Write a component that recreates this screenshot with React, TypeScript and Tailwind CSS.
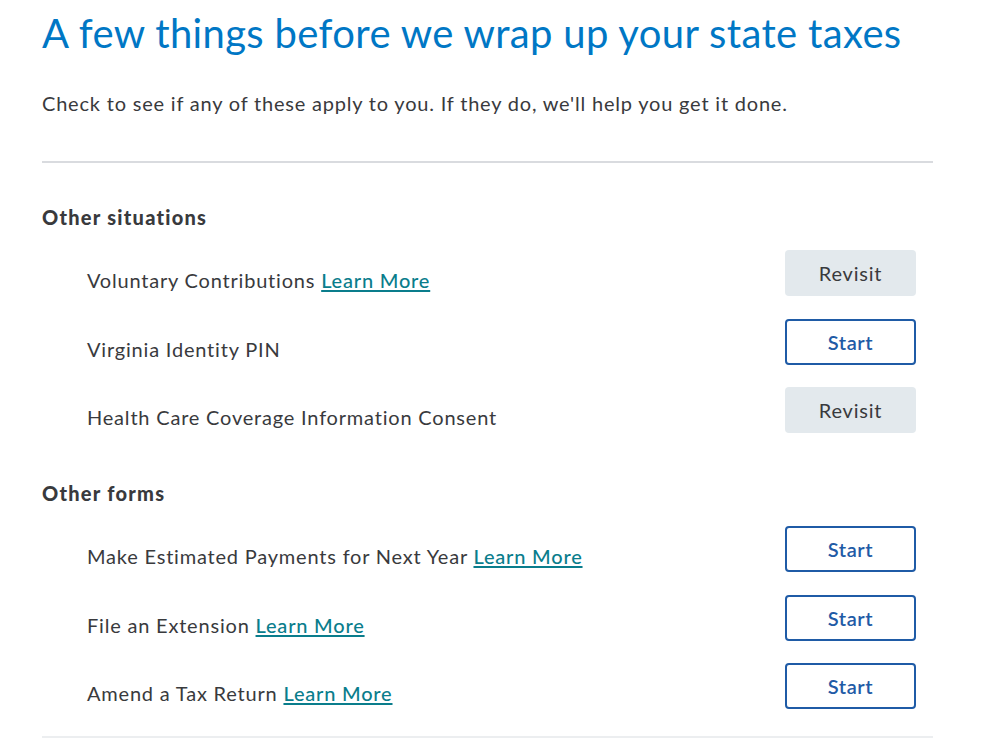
const font = { fontFamily: "Lato, 'Open Sans', sans-serif" };

type Item = {
  label: string;
  learnMore?: boolean;
  action: "Start" | "Revisit";
};

const situations: Item[] = [
  { label: "Voluntary Contributions", learnMore: true, action: "Revisit" },
  { label: "Virginia Identity PIN", action: "Start" },
  { label: "Health Care Coverage Information Consent", action: "Revisit" },
];

const forms: Item[] = [
  { label: "Make Estimated Payments for Next Year", learnMore: true, action: "Start" },
  { label: "File an Extension", learnMore: true, action: "Start" },
  { label: "Amend a Tax Return", learnMore: true, action: "Start" },
];

function ActionButton({ action }: { action: Item["action"] }) {
  if (action === "Revisit") {
    return (
      <button className="flex h-[46px] w-[131px] items-center justify-center rounded-[4px] bg-[#e3e9ed] text-[20px] tracking-[0.8px] text-[#393a3d]">
        Revisit
      </button>
    );
  }
  return (
    <button className="flex h-[46px] w-[131px] items-center justify-center rounded-[4px] border-2 border-[#1f5ba6] bg-white text-[20px] font-semibold tracking-[0.6px] text-[#1f5ba6]">
      Start
    </button>
  );
}

function Row({ item }: { item: Item }) {
  return (
    <div className="flex items-start justify-between pl-[45px] pr-[17px]">
      <p className="mt-[16px] text-[20px] leading-7 tracking-[0.8px] text-[#393a3d]">
        {item.label}
        {item.learnMore && (
          <>
            {" "}
            <a href="#" className="font-medium text-[#0a7d8c] underline underline-offset-2">
              Learn More
            </a>
          </>
        )}
      </p>
      <ActionButton action={item.action} />
    </div>
  );
}

function Section({ title, items }: { title: string; items: Item[] }) {
  return (
    <section>
      <h2 className="text-[20px] font-black leading-7 tracking-[1.25px] text-[#393a3d]">{title}</h2>
      <div className="mt-[19px] flex flex-col gap-[22.5px]">
        {items.map((item) => (
          <Row key={item.label} item={item} />
        ))}
      </div>
    </section>
  );
}

export default function App() {
  return (
    <div className="min-h-screen bg-white" style={font}>
      <div className="ml-[42px] w-[891px] pt-[9px]">
        <h1 className="text-[40px] leading-[48px] tracking-[0.35px] text-[#0077c5]">
          A few things before we wrap up your state taxes
        </h1>
        <p className="mt-[32px] text-[20px] leading-7 tracking-[0.8px] text-[#393a3d]">
          Check to see if any of these apply to you. If they do, we'll help you get it done.
        </p>
        <hr className="mt-[44px] border-t-2 border-[#d9dbdf]" />
        <div className="mt-[40px]">
          <Section title="Other situations" items={situations} />
        </div>
        <div className="mt-[46px]">
          <Section title="Other forms" items={forms} />
        </div>
        <hr className="mt-[27px] border-t-2 border-[#eceef0]" />
      </div>
    </div>
  );
}
